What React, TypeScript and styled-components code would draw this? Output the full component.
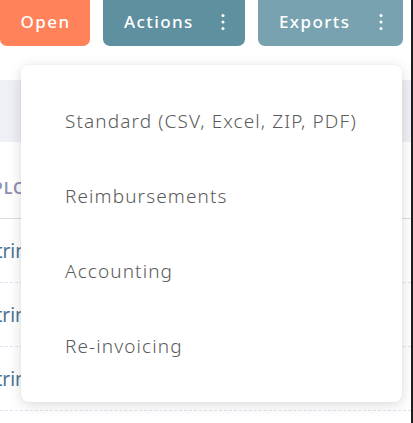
import styled, { createGlobalStyle } from "styled-components";

const GlobalStyle = createGlobalStyle`
  html, body {
    margin: 0;
    padding: 0;
    background: #ffffff;
  }
  body {
    font-family: "Noto Sans", "Open Sans", Arial, sans-serif;
  }
`;

type Variant = "open" | "actions" | "exports";

const buttonColors: Record<Variant, string> = {
  open: "#ff825a",
  actions: "#5f909f",
  exports: "#78a2b0",
};

const exportItems = [
  "Standard (CSV, Excel, ZIP, PDF)",
  "Reimbursements",
  "Accounting",
  "Re-invoicing",
];

const rows = ["Catrin", "Katrin", "Katrin"];

const Dots = () => (
  <svg width="4" height="18" viewBox="0 0 4 18" aria-hidden="true">
    <circle cx="2" cy="2.5" r="1.5" fill="#fff" />
    <circle cx="2" cy="9" r="1.5" fill="#fff" />
    <circle cx="2" cy="15.5" r="1.5" fill="#fff" />
  </svg>
);

const App = () => {
  return (
    <Frame>
      <GlobalStyle />
      <Toolbar>
        <ActionButton variant="open" width={90}>
          <span>Open</span>
        </ActionButton>
        <ActionButton variant="actions" width={142}>
          <span>Actions</span>
          <Dots />
        </ActionButton>
        <ActionButton variant="exports" width={145}>
          <span>Exports</span>
          <Dots />
        </ActionButton>
      </Toolbar>

      <Table>
        <Band />
        <HeaderRow>
          <HeaderCell>Employee</HeaderCell>
        </HeaderRow>
        {rows.map((name, i) => (
          <Row key={i}>
            <Cell>{name}</Cell>
          </Row>
        ))}
      </Table>

      <Menu>
        {exportItems.map((item) => (
          <MenuItem key={item}>{item}</MenuItem>
        ))}
      </Menu>
    </Frame>
  );
};

export default App;

const Frame = styled.div`
  position: relative;
  width: 411px;
  height: 423px;
  border-right: 2px solid #1d1d1d;
  overflow: hidden;
  background: #ffffff;
`;

const Toolbar = styled.div`
  display: flex;
  gap: 13px;
  margin-top: -8px;
`;

const ActionButton = styled.button<{ variant: Variant; width: number }>`
  box-sizing: border-box;
  width: ${(p) => p.width}px;
  height: 54px;
  padding: 5px 20px 0 21px;
  border: none;
  border-radius: 7px;
  background: ${(p) => buttonColors[p.variant]};
  color: #ffffff;
  display: flex;
  align-items: center;
  justify-content: ${(p) => (p.variant === "open" ? "center" : "space-between")};
  font-family: "Noto Sans", "Open Sans", Arial, sans-serif;
  font-size: 17px;
  font-weight: 500;
  letter-spacing: 1.4px;
  cursor: pointer;
`;

const Table = styled.div`
  margin-top: 34px;
`;

const Band = styled.div`
  height: 62px;
  background: #eef0f5;
`;

const HeaderRow = styled.div`
  height: 77px;
  display: flex;
  align-items: flex-end;
  padding-bottom: 19px;
  box-sizing: border-box;
  border-bottom: 1px solid #dcdde3;
`;

const HeaderCell = styled.span`
  margin-left: -33px;
  color: #8d92b4;
  font-size: 16px;
  font-weight: 600;
  letter-spacing: 1px;
  text-transform: uppercase;
`;

const Row = styled.div`
  height: 64px;
  display: flex;
  align-items: center;
  box-sizing: border-box;
  border-bottom: 1px dashed #e1e2f2;
`;

const Cell = styled.span`
  margin-left: -27px;
  color: #4b7592;
  font-size: 19px;
`;

const Menu = styled.div`
  position: absolute;
  left: 21px;
  top: 65px;
  width: 381px;
  height: 337px;
  box-sizing: border-box;
  padding: 18px 0 19px;
  background: #ffffff;
  border-radius: 8px;
  box-shadow: 0 3px 14px rgba(0, 0, 0, 0.14), 0 0 3px rgba(0, 0, 0, 0.04);
  display: flex;
  flex-direction: column;
`;

const MenuItem = styled.div`
  height: 75px;
  display: flex;
  align-items: center;
  padding-left: 44px;
  color: #5a5a5a;
  font-size: 19px;
  font-weight: 300;
  letter-spacing: 1.1px;
  cursor: pointer;
`;
